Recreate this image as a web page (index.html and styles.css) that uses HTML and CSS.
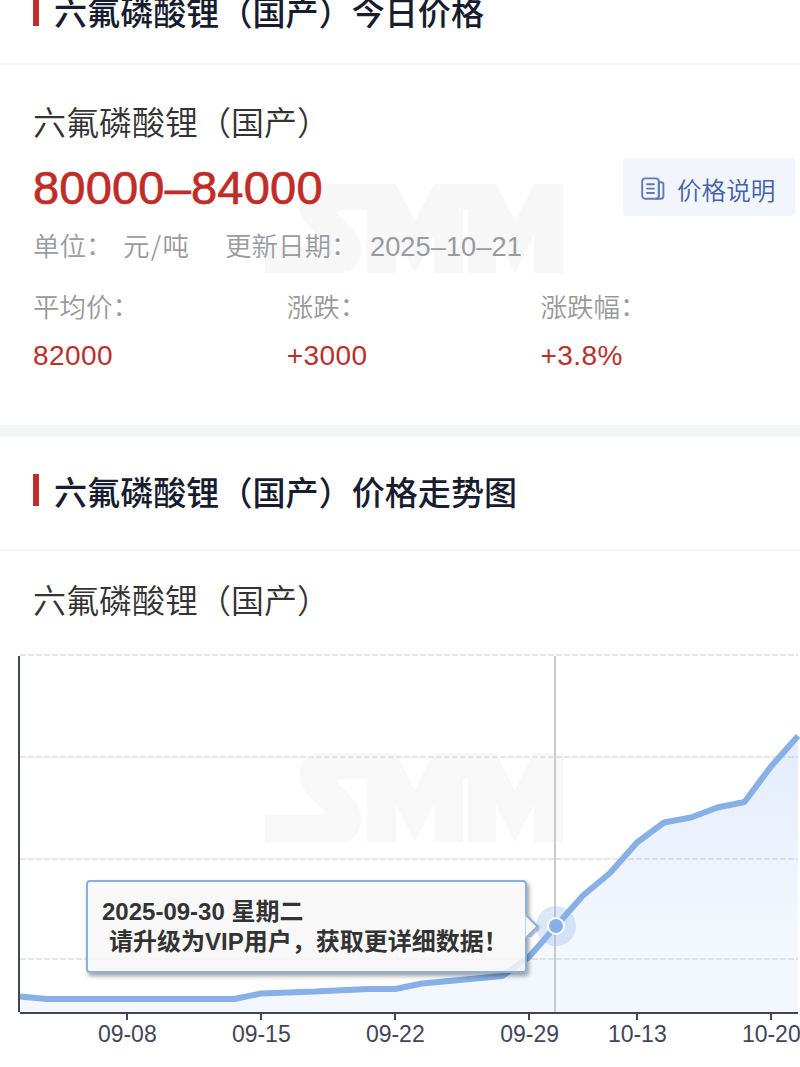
FILE: index.html
```
<!DOCTYPE html>
<html lang="zh-CN">
<head>
  <meta charset="UTF-8" />
  <meta name="viewport" content="width=device-width, initial-scale=1.0" />
  <title>六氟磷酸锂（国产）价格</title>
  <link rel="stylesheet" href="styles.css">
</head>
<body>

  <svg class="defs" width="0" height="0">
    <symbol id="smm" viewBox="0 0 298 89">
      <path d="M0 62H55C59 62 59 58 56 55L45 44C36 35 34 25 35 17C37 6 44 0 54 0H131L150 37L169 0H231L250 37L269 0H298V89H269V52L250 89L231 52V89H203V26H198V89H169V52L150 89L131 52V89H102V26H76C71 26 71 29 75 32L87 45C95 54 97 61 96 68C94 82 87 89 76 89H0Z"/>
    </symbol>
  </svg>

  <!-- Today price -->
  <section class="card card-price">
    <header class="card-header">
      <h2>六氟磷酸锂（国产）今日价格</h2>
    </header>
    <div class="card-body">
      <svg class="watermark"><use href="#smm"/></svg>
      <h3 class="name">六氟磷酸锂（国产）</h3>
      <div class="price-row">
        <div class="price">80000–84000</div>
        <a class="btn-explain" href="#">
          <svg width="24" height="24" viewBox="0 0 24 24" fill="none" stroke="currentColor" stroke-width="1.9" stroke-linecap="round">
            <rect x="1.2" y="1.4" width="16.6" height="20.4" rx="3"/>
            <path d="M17.8 5.2H20a2.4 2.4 0 0 1 2.4 2.4V19a2.8 2.8 0 0 1-2.8 2.8H15.5M17.8 5.2V19.2"/>
            <path d="M6 7.2H13M6 11.6H13M6 16H13"/>
          </svg>
          <span>价格说明</span>
        </a>
      </div>
      <div class="meta">
        <span class="unit">单位<i>：</i></span>
        <span class="unit-value">元/吨</span>
        <span class="date">更新日期<i>：</i></span>
        <span class="date-value">2025–10–21</span>
      </div>
      <div class="stats">
        <div class="stat"><label>平均价<i>：</i></label><b>82000</b></div>
        <div class="stat"><label>涨跌<i>：</i></label><b>+3000</b></div>
        <div class="stat"><label>涨跌幅<i>：</i></label><b>+3.8%</b></div>
      </div>
    </div>
  </section>

  <!-- Price trend -->
  <section class="card card-trend">
    <header class="card-header">
      <h2>六氟磷酸锂（国产）价格走势图</h2>
    </header>
    <div class="card-body">
      <h3 class="name">六氟磷酸锂（国产）</h3>
      <div class="chart">
        <svg class="watermark"><use href="#smm"/></svg>
        <svg class="plot" width="800" height="427" viewBox="0 640 800 427">
          <defs>
            <linearGradient id="area" x1="0" y1="736" x2="0" y2="1012" gradientUnits="userSpaceOnUse">
              <stop offset="0" stop-color="#98b9f2" stop-opacity="0.26"/>
              <stop offset="0.75" stop-color="#a0bdf5" stop-opacity="0.12"/>
              <stop offset="1" stop-color="#a0bdf5" stop-opacity="0.12"/>
            </linearGradient>
          </defs>
          <path class="grid" d="M20 655H798M20 757H798M20 859H798M20 959H798"/>
          <path fill="url(#area)" d="M20 996.5L46.6 999H234.4L261 993.5L315 991.5L368 989H395L422 983.5L502.5 976L529 957L556 926L583 895.5L610 873L637 842.5L664 822.5L691 817.5L717.5 807.5L744.5 802L771 766.5L798 736V1012H20Z"/>
          <path class="pointer" d="M555 656V1012"/>
          <path class="line" d="M20 996.5L46.6 999H234.4L261 993.5L315 991.5L368 989H395L422 983.5L502.5 976L529 957L556 926L583 895.5L610 873L637 842.5L664 822.5L691 817.5L717.5 807.5L744.5 802L771 766.5L798 736"/>
          <path class="axis" d="M19 656V1012M20 1013H798M127 1013V1020M261 1013V1020M395 1013V1020M529 1013V1020M637 1013V1020M771 1013V1020"/>
          <circle cx="556" cy="926" r="20" fill="#8ab2e8" fill-opacity="0.3"/>
          <circle cx="556" cy="926" r="8" fill="#86b0e6" stroke="#fff" stroke-width="2"/>
          <g class="ticks">
            <text x="127.3" y="1042">09-08</text>
            <text x="261.3" y="1042">09-15</text>
            <text x="395.3" y="1042">09-22</text>
            <text x="529.6" y="1042">09-29</text>
            <text x="637.3" y="1042">10-13</text>
            <text x="771.3" y="1042">10-20</text>
          </g>
        </svg>
        <div class="tooltip">
          <p>2025-09-30 星期二</p>
          <p class="tip">请升级为VIP用户，获取更详细数据！</p>
        </div>
      </div>
    </div>
  </section>

</body>
</html>
```
FILE: styles.css
```
* {
  box-sizing: border-box;
}

body {
  margin: 0;
  width: 800px;
  height: 1067px;
  overflow: hidden;
  background: #fff;
  font-family: "Noto Sans CJK SC", sans-serif;
  color: #333;
}

h2, h3, p {
  margin: 0;
}

.defs {
  position: absolute;
}

.card-header {
  display: flex;
  align-items: flex-start;
  height: 114px;
  padding: 37px 33px 0;
  border-bottom: 2px solid #f4f6f6;
}

.card-header::before {
  content: "";
  width: 6px;
  height: 32px;
  margin-right: 15px;
  background: #c02c28;
}

.card-header h2 {
  font-size: 33.1px;
  line-height: 34px;
  font-weight: 500;
  color: #171c2f;
  white-space: nowrap;
}

.card-price {
  margin-top: -43px;
  border-bottom: 12px solid #f4f5f7;
}

.card-price .card-header {
  height: 108px;
}

.card-body {
  position: relative;
}

.card-price .card-body {
  height: 360px;
  padding: 32px 5px 0 33px;
}

.watermark {
  position: absolute;
  left: 265px;
  top: 119px;
  width: 298px;
  height: 89px;
  fill: #f7f7f8;
  z-index: -1;
}

.name {
  font-size: 33px;
  line-height: 48px;
  font-weight: 350;
  color: #333;
}

.price-row {
  display: flex;
  justify-content: space-between;
  align-items: center;
  height: 58px;
  margin-top: 13px;
}

.price {
  padding-top: 2px;
  font-family: "Liberation Sans", Arial, sans-serif;
  font-size: 47px;
  letter-spacing: 0.2px;
  line-height: 58px;
  color: #c02c28;
  -webkit-text-stroke: 0.7px #c02c28;
}

.btn-explain {
  display: flex;
  align-items: center;
  gap: 12px;
  width: 172px;
  height: 58px;
  padding: 3px 0 0 18px;
  border-radius: 4px;
  background: #f2f6fc;
  color: #4561ab;
  font-size: 24.6px;
  font-weight: 350;
  text-decoration: none;
}

.btn-explain svg {
  color: #6079bb;
}

.meta {
  display: flex;
  height: 40px;
  margin-top: 9px;
  font-size: 26.5px;
  line-height: 40px;
  font-weight: 350;
  color: #999ba1;
  white-space: nowrap;
}

.meta i,
.stat i {
  display: inline-block;
  font-style: normal;
  transform: translate(0, -1px);
}

.unit {
  width: 90px;
}

.unit-value {
  width: 102px;
  letter-spacing: 1.3px;
}

.date {
  width: 145px;
}

.date-value {
  font-family: "Liberation Sans", Arial, sans-serif;
  font-size: 27.3px;
  line-height: 43px;
}

.stats {
  display: grid;
  grid-template-columns: repeat(3, 253.8px);
  margin-top: 21px;
}

.stat label,
.stat b {
  display: block;
  font-size: 26.5px;
  line-height: 40px;
  font-weight: 350;
  color: #999;
}

.stat b {
  margin-top: 10px;
  font-family: "Liberation Sans", Arial, sans-serif;
  font-size: 28px;
  font-weight: 400;
  letter-spacing: 0.4px;
  color: #b92f2d;
}

.card-trend .name {
  height: 89px;
  padding: 24px 33px 0;
}

/* Chart */
.chart {
  position: relative;
  height: 427px;
}

.chart .watermark {
  top: 113px;
  fill: #f8f8f9;
}

.plot {
  display: block;
}

.grid {
  fill: none;
  stroke: #e5e5e6;
  stroke-width: 2;
  stroke-dasharray: 6 2;
}

.pointer {
  stroke: #c9cacc;
  stroke-width: 2;
}

.line {
  fill: none;
  stroke: #86b0e6;
  stroke-width: 6;
  stroke-linejoin: bevel;
}

.axis {
  fill: none;
  stroke: #42455a;
  stroke-width: 2;
}

.ticks {
  font-family: "Liberation Sans", Arial, sans-serif;
  font-size: 23px;
  fill: #42455a;
  text-anchor: middle;
}

.tooltip {
  position: absolute;
  left: 86px;
  top: 240px;
  width: 441px;
  height: 93px;
  padding: 15px 14px;
  border: 2px solid #86b0e0;
  border-radius: 4px;
  background: rgba(247, 247, 247, 0.85);
  box-shadow: 2px 3px 4px rgba(0, 0, 0, 0.38);
  font-family: "Liberation Sans", "Noto Sans CJK SC", sans-serif;
  font-size: 24px;
  line-height: 30px;
  font-weight: 700;
  color: #333;
  white-space: nowrap;
}

.tooltip::after {
  content: "";
  position: absolute;
  right: -10px;
  top: 35px;
  width: 17px;
  height: 17px;
  border-top: 2px solid #86b0e0;
  border-right: 2px solid #86b0e0;
  background: #f7f7f7;
  box-shadow: 2px 1px 4px rgba(0, 0, 0, 0.38);
  clip-path: polygon(0 0, 5px -5px, 22px -5px, 22px 12px, 17px 17px);
  transform: rotate(45deg);
}

.tip {
  padding-left: 7px;
}
```
